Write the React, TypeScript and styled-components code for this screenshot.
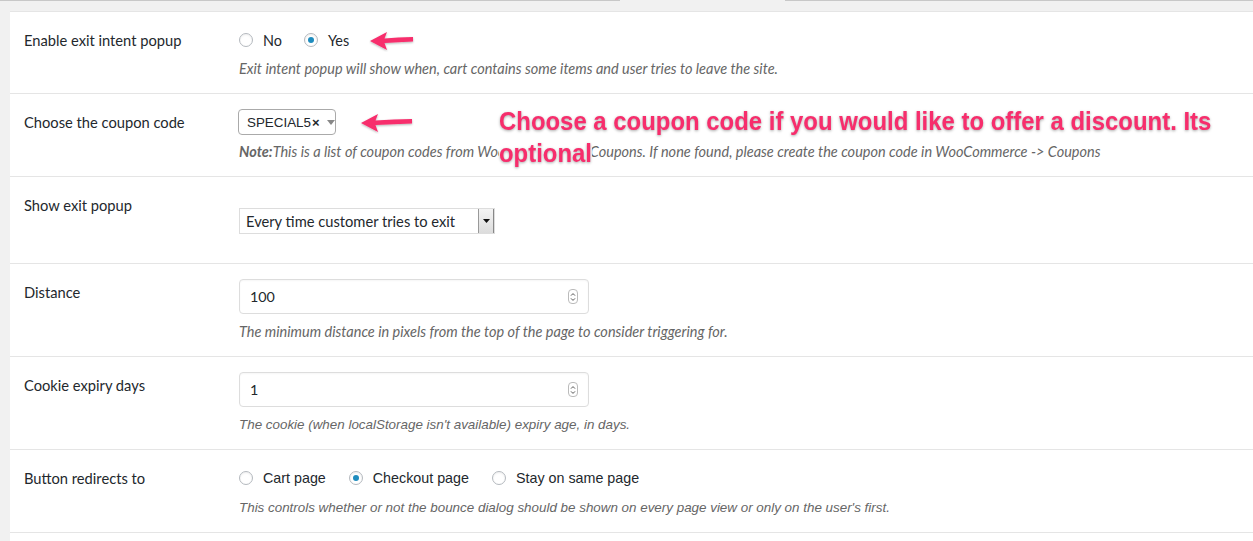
import React from 'react';
import styled, { createGlobalStyle } from 'styled-components';

const GlobalStyle = createGlobalStyle`
  html, body {
    margin: 0;
    padding: 0;
    background: #f1f1f1;
  }
  body {
    font-family: Lato, 'Liberation Sans', sans-serif;
    color: #23282d;
  }
`;

const App = () => {
  return (
    <>
      <GlobalStyle />
      <TabLine>
        <TabEdge $width='620px' />
        <TabEdge $width='165px' $active />
        <TabEdge $width='auto' />
      </TabLine>

      <Panel>
        <Row>
          <Label>Enable exit intent popup</Label>
          <Control>
            <RadioGroup>
              <Radio label='No' />
              <Radio label='Yes' checked />
              <ArrowWrap $offset='-2px'>
                <Arrow width={46} />
              </ArrowWrap>
            </RadioGroup>
            <Desc $gap='10px'>
              Exit intent popup will show when, cart contains some items and
              user tries to leave the site.
            </Desc>
          </Control>
        </Row>

        <Row>
          <Label>Choose the coupon code</Label>
          <Control $top='0px'>
            <CouponLine>
              <CouponSelect>
                SPECIAL5<Clear>×</Clear>
                <Caret />
              </CouponSelect>
              <ArrowWrap $offset='24px'>
                <Arrow width={54} />
              </ArrowWrap>
            </CouponLine>
            <Desc $gap='8px'>
              <b>Note:</b>This is a list of coupon codes from WooCommerce -&gt;
              Coupons. If none found, please create the coupon code in
              WooCommerce -&gt; Coupons
            </Desc>
            <Callout>
              <CalloutText>
                Choose a coupon code if you would like to offer a discount. Its
              </CalloutText>
              <br />
              <CalloutText>optional</CalloutText>
            </Callout>
          </Control>
        </Row>

        <Row>
          <Label>Show exit popup</Label>
          <Control $top='16px' $bottom='14px'>
            <NativeSelect>
              <span>Every time customer tries to exit</span>
              <SelectButton>
                <svg width='7' height='4' viewBox='0 0 7 4'>
                  <path d='M0 0 H7 L3.5 4 Z' fill='#111' />
                </svg>
              </SelectButton>
            </NativeSelect>
          </Control>
        </Row>

        <Row>
          <Label>Distance</Label>
          <Control $top='0px'>
            <NumberInput value='100' />
            <Desc $gap='9px'>
              The minimum distance in pixels from the top of the page to
              consider triggering for.
            </Desc>
          </Control>
        </Row>

        <Row>
          <Label>Cookie expiry days</Label>
          <Control $top='0px'>
            <NumberInput value='1' />
            <Desc $gap='9px' $narrow>
              The cookie (when localStorage isn't available) expiry age, in
              days.
            </Desc>
          </Control>
        </Row>

        <Row>
          <Label>Button redirects to</Label>
          <Control>
            <RadioGroup $narrow>
              <Radio label='Cart page' narrow />
              <Radio label='Checkout page' narrow checked />
              <Radio label='Stay on same page' narrow />
            </RadioGroup>
            <Desc $gap='11px' $narrow>
              This controls whether or not the bounce dialog should be shown on
              every page view or only on the user's first.
            </Desc>
          </Control>
        </Row>
        <Row />
      </Panel>
    </>
  );
};
export default App;

const Radio = ({
  label,
  checked,
  narrow,
}: {
  label: string;
  checked?: boolean;
  narrow?: boolean;
}) => (
  <RadioLabel $narrow={narrow}>
    <RadioCircle $checked={checked} />
    {label}
  </RadioLabel>
);

// pink hand-drawn style arrow pointing left
const Arrow = ({ width }: { width: number }) => (
  <svg width={width} height='22' viewBox={`0 0 ${width} 22`}>
    <defs>
      <filter id='arrowShadow' x='-20%' y='-40%' width='140%' height='180%'>
        <feDropShadow dx='0' dy='1' stdDeviation='0.8' floodOpacity='0.3' />
      </filter>
    </defs>
    <path
      d={`M1 11 L18 2 L15.5 8.6 Q${width / 1.6} 7.4 ${width - 2} 7 L${
        width - 2
      } 11.5 Q${width / 1.6} 12.2 15.5 13 L18 20 Z`}
      fill='#f72d6c'
      filter='url(#arrowShadow)'
    />
  </svg>
);

const NumberInput = ({ value }: { value: string }) => (
  <NumberBox>
    <span>{value}</span>
    <Spinner>
      <svg width='6' height='10' viewBox='0 0 6 10'>
        <path d='M1 3.6 L3 1.6 L5 3.6' stroke='#555' fill='none' />
        <path d='M1 6.4 L3 8.4 L5 6.4' stroke='#555' fill='none' />
      </svg>
    </Spinner>
  </NumberBox>
);

const TabLine = styled.div`
  display: flex;
  height: 11px;
`;

const TabEdge = styled.div<{ $width: string; $active?: boolean }>`
  width: ${({ $width }) => $width};
  flex: ${({ $width }) => ($width === 'auto' ? 1 : 'none')};
  border-top: 1px solid ${({ $active }) => ($active ? '#f1f1f1' : '#c8c8c8')};
`;

const Panel = styled.div`
  margin-left: 10px;
  background: #fff;
  border-top: 1px solid #e5e5e5;
`;

const Row = styled.div`
  display: grid;
  grid-template-columns: 215px 1fr;
  padding: 15px 14px 15px;
  border-bottom: 1px solid #e5e5e5;
  &:last-child {
    border-bottom: none;
  }
`;

const Label = styled.div`
  margin-top: 3px;
  font-size: 14.7px;
  line-height: 20px;
  color: #23282d;
`;

const Control = styled.div<{ $top?: string; $bottom?: string }>`
  position: relative;
  margin-top: ${({ $top = '3px' }) => $top};
  margin-bottom: ${({ $bottom = '0' }) => $bottom};
`;

const RadioGroup = styled.div<{ $narrow?: boolean }>`
  display: flex;
  align-items: center;
  gap: ${({ $narrow }) => ($narrow ? '23px' : '22px')};
  height: 20px;
`;

const RadioLabel = styled.label<{ $narrow?: boolean }>`
  display: flex;
  align-items: center;
  gap: 10px;
  font-family: ${({ $narrow }) =>
    $narrow ? "'Liberation Sans', Arial, sans-serif" : 'Lato, sans-serif'};
  font-size: ${({ $narrow }) => ($narrow ? '14.3px' : '14.4px')};
  color: #23282d;
`;

const RadioCircle = styled.span<{ $checked?: boolean }>`
  width: 14px;
  height: 14px;
  box-sizing: border-box;
  border-radius: 50%;
  border: 1px solid #b4b9be;
  background: #fff;
  box-shadow: inset 0 1px 2px rgba(0, 0, 0, 0.07);
  display: flex;
  align-items: center;
  justify-content: center;
  &::after {
    content: '';
    display: ${({ $checked }) => ($checked ? 'block' : 'none')};
    width: 6px;
    height: 6px;
    border-radius: 50%;
    background: #1e8cbe;
  }
`;

const ArrowWrap = styled.span<{ $offset: string }>`
  display: flex;
  margin-left: ${({ $offset }) => $offset};
  margin-top: 1px;
`;

const Desc = styled.p<{ $gap: string; $narrow?: boolean }>`
  margin: ${({ $gap }) => $gap} 0 0;
  font-family: ${({ $narrow }) =>
    $narrow ? "'Liberation Sans', Arial, sans-serif" : 'Lato, sans-serif'};
  font-style: italic;
  font-size: ${({ $narrow }) => ($narrow ? '13.4px' : '14.5px')};
  line-height: 18px;
  color: #666;
  white-space: nowrap;
`;

const CouponLine = styled.div`
  display: flex;
  align-items: center;
`;

const CouponSelect = styled.div`
  display: flex;
  align-items: center;
  box-sizing: border-box;
  height: 26px;
  width: 98px;
  margin-left: -1px;
  padding-left: 8px;
  border: 1px solid #aaa;
  border-radius: 4px;
  font-family: 'Liberation Sans', Arial, sans-serif;
  font-size: 13.4px;
  color: #23282d;
`;

const Clear = styled.span`
  font-size: 13px;
  font-weight: bold;
  margin-left: 1px;
`;

const Caret = styled.span`
  margin-left: 7px;
  width: 0;
  height: 0;
  border-left: 4px solid transparent;
  border-right: 4px solid transparent;
  border-top: 5px solid #888;
`;

const Callout = styled.div`
  position: absolute;
  left: 260px;
  top: -4px;
  white-space: nowrap;
  transform: scaleX(0.92);
  transform-origin: left top;
  font-family: 'Liberation Sans', Arial, sans-serif;
  font-weight: bold;
  font-size: 26px;
  line-height: 32px;
`;

const CalloutText = styled.span`
  color: #f72d6c;
  background: #fff;
  text-shadow: 0 1px 3px rgba(0, 0, 0, 0.35);
`;

const NativeSelect = styled.div`
  display: flex;
  align-items: stretch;
  box-sizing: border-box;
  width: 256px;
  height: 26px;
  border: 1px solid #ddd;
  font-size: 14.7px;
  color: #23282d;
  span {
    flex: 1;
    display: flex;
    align-items: center;
    padding-left: 6px;
  }
`;

const SelectButton = styled.div`
  width: 14px;
  display: flex;
  align-items: center;
  justify-content: center;
  background: linear-gradient(#f4f4f4, #dcdcdc);
  border-left: 1px solid #999;
  border-right: 1px solid #888;
`;

const NumberBox = styled.div`
  display: flex;
  align-items: center;
  justify-content: space-between;
  box-sizing: border-box;
  width: 350px;
  height: 35px;
  padding: 0 10px 0 10px;
  border: 1px solid #ddd;
  border-radius: 4px;
  box-shadow: inset 0 1px 2px rgba(0, 0, 0, 0.04);
  font-size: 14.3px;
  color: #23282d;
`;

const Spinner = styled.span`
  display: flex;
  align-items: center;
  justify-content: center;
  width: 8px;
  height: 13px;
  border: 1px solid #bbb;
  border-radius: 4px;
`;
